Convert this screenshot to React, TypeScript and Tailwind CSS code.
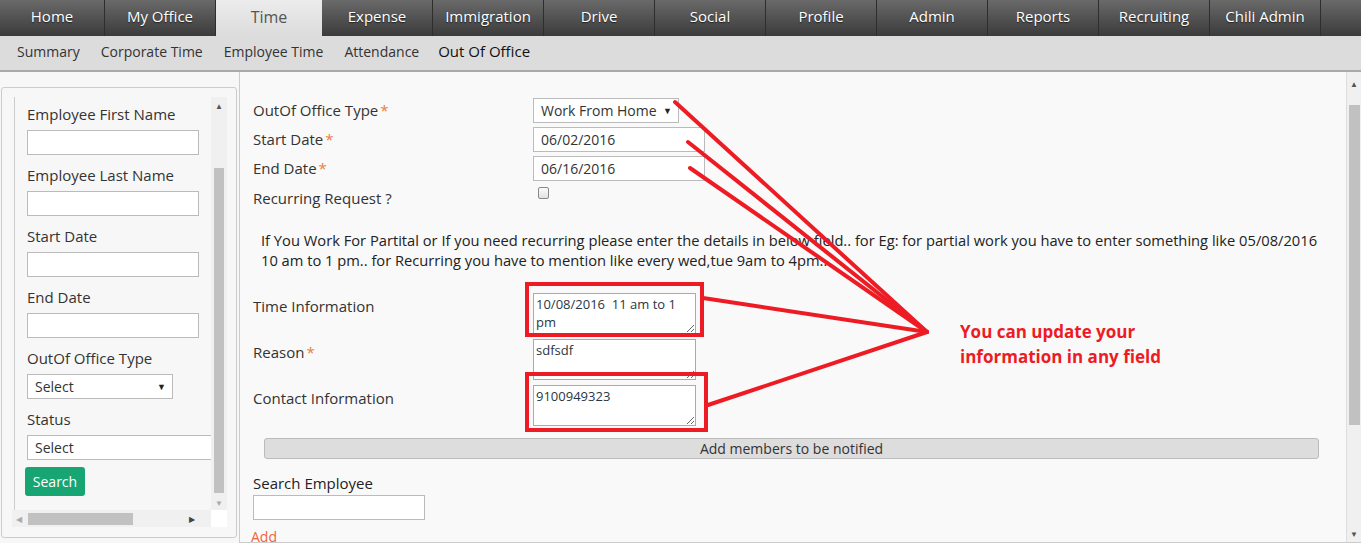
import React from 'react';

const tabs = ['Home', 'My Office', 'Time', 'Expense', 'Immigration', 'Drive', 'Social', 'Profile', 'Admin', 'Reports', 'Recruiting', 'Chili Admin'];
const subTabs = ['Summary', 'Corporate Time', 'Employee Time', 'Attendance'];

function Req() {
  return <span className="text-[#e8803c] ml-[2px]">*</span>;
}

function TextBox({ value = '', className = '' }: { value?: string; className?: string }) {
  return (
    <div className={`h-[25px] bg-white border border-[#bbb] flex items-center pl-[7px] text-[14px] text-[#333] ${className}`}>
      {value}
    </div>
  );
}

function SelectBox({ value, className = '' }: { value: string; className?: string }) {
  return (
    <div className={`h-[25px] bg-white border border-[#bbb] flex items-center justify-between pl-[7px] pr-[6px] text-[14px] text-[#333] ${className}`}>
      <span>{value}</span>
      <span className="text-[9px] text-[#222]">▼</span>
    </div>
  );
}

function Area({ value }: { value: string }) {
  return (
    <textarea
      readOnly
      defaultValue={value}
      className="w-[163px] h-[41px] bg-white border border-[#aaa] px-[2px] py-[1px] text-[13px] leading-[18px] text-[#2b3644] resize-y outline-none block font-['Open_Sans']"
    />
  );
}

function Field({ label, children }: { label: string; children: React.ReactNode }) {
  return (
    <div className="flex flex-col gap-[6px] mb-[10px]">
      <div className="text-[15px] leading-[20px] text-[#333]">{label}</div>
      {children}
    </div>
  );
}

export default function App() {
  return (
    <div className="w-[1361px] h-[543px] overflow-hidden relative bg-[#f7f7f7] font-['Open_Sans',sans-serif]">
      {/* top tabs */}
      <nav className="h-[36px] flex bg-gradient-to-b from-[#6a6a6a] to-[#3b3b3b]">
        {tabs.map((t, i) =>
          t === 'Time' ? (
            <div key={t} className="w-[106px] flex items-center justify-center pb-[3px] bg-gradient-to-b from-[#ececec] to-[#dcdcdc] text-[16px] text-[#555]">
              {t}
            </div>
          ) : (
            <div
              key={t}
              className={`${i === 0 ? 'w-[105px]' : 'w-[111px]'} flex items-center justify-center pb-[4px] text-[15px] text-white border-r border-[#2e2e2e] [text-shadow:0_1px_1px_#222]`}
            >
              {t}
            </div>
          )
        )}
      </nav>

      {/* sub tabs */}
      <div className="h-[36px] bg-[#dcdcdc] border-b-2 border-[#a9a9a9] flex items-center gap-[21px] pl-[17px] pb-[4px]">
        {subTabs.map((t) => (
          <span key={t} className="text-[14px] text-[#333]">{t}</span>
        ))}
        <span className="text-[15px] text-[#111] -ml-[2px]">Out Of Office</span>
      </div>

      <div className="flex h-[471px]">
        {/* left filter panel */}
        <aside className="w-[239px] pt-[15px] pl-[1px]">
          <div className="w-[236px] h-[451px] border border-[#ccc] rounded-[3px] pt-[9px] pl-[10px]">
            <div className="w-[215px] h-[430px] flex flex-col">
              <div className="flex h-[413px]">
                <div className="w-[197px] ml-[2px] border-l border-[#ccc] pl-[12px] pt-[7px] overflow-hidden">
                  <Field label="Employee First Name"><TextBox className="w-[172px]" /></Field>
                  <Field label="Employee Last Name"><TextBox className="w-[172px]" /></Field>
                  <Field label="Start Date"><TextBox className="w-[172px]" /></Field>
                  <Field label="End Date"><TextBox className="w-[172px]" /></Field>
                  <Field label="OutOf Office Type"><SelectBox value="Select" className="w-[146px]" /></Field>
                  <div className="flex flex-col gap-[6px]">
                    <div className="text-[15px] leading-[20px] text-[#333]">Status</div>
                    <TextBox value="Select" className="w-[200px]" />
                  </div>
                  <button className="mt-[7px] -ml-[2px] w-[60px] h-[29px] rounded-[3px] bg-[#17a673] text-white text-[14px]">Search</button>
                </div>
                <div className="w-[16px] bg-[#f0f0f0] flex flex-col items-center">
                  <span className="text-[8px] text-[#555] mt-[3px] h-[10px]">▲</span>
                  <div className="w-[10px] mt-[58px] h-[325px] bg-[#c1c1c1]" />
                  <span className="text-[8px] text-[#aaa] mt-[4px]">▼</span>
                </div>
              </div>
              <div className="h-[17px] flex">
                <div className="w-[199px] bg-[#f0f0f0] flex items-center">
                  <span className="text-[8px] text-[#aaa] ml-[4px]">◀</span>
                  <div className="ml-[6px] w-[105px] h-[12px] bg-[#c1c1c1]" />
                  <span className="text-[8px] text-[#444] ml-[56px]">▶</span>
                </div>
                <div className="w-[16px] bg-white" />
              </div>
            </div>
          </div>
        </aside>

        {/* main form */}
        <main className="flex-1 border-l border-[#ccc] border-b flex bg-[#f9f9f9]">
          <div className="flex-1 pl-[13px] pt-[24px]">
            <div className="flex items-center h-[29px]">
              <div className="w-[280px] text-[15px] text-[#333]">OutOf Office Type<Req /></div>
              <SelectBox value="Work From Home" className="w-[146px]" />
            </div>
            <div className="flex items-center h-[29px]">
              <div className="w-[280px] text-[15px] text-[#333]">Start Date<Req /></div>
              <TextBox value="06/02/2016" className="w-[172px]" />
            </div>
            <div className="flex items-center h-[29px]">
              <div className="w-[280px] text-[15px] text-[#333]">End Date<Req /></div>
              <TextBox value="06/16/2016" className="w-[172px]" />
            </div>
            <div className="flex items-start h-[29px] pt-[5px]">
              <div className="w-[280px] text-[15px] text-[#333] leading-[20px]">Recurring Request ?</div>
              <div className="ml-[5px] mt-[-1px] w-[11px] h-[12px] rounded-[2px] border border-[#888] bg-gradient-to-b from-[#fafafa] to-[#e2e2e2]" />
            </div>

            <p className="mt-[18px] pl-[8px] pr-[20px] text-[14.7px] leading-[20px] text-[#222]">
              If You Work For Partital or If you need recurring please enter the details in below field.. for Eg: for partial work you have to enter something like 05/08/2016 10 am to 1 pm.. for Recurring you have to mention like every wed,tue 9am to 4pm..
            </p>

            <div className="flex items-start mt-[23px]">
              <div className="w-[280px] text-[15px] text-[#333] leading-[20px] pt-[3px]">Time Information</div>
              <Area value="10/08/2016  11 am to 1 pm" />
            </div>
            <div className="flex items-start mt-[5px]">
              <div className="w-[280px] text-[15px] text-[#333] leading-[20px] pt-[3px]">Reason<Req /></div>
              <Area value="sdfsdf" />
            </div>
            <div className="flex items-start mt-[5px]">
              <div className="w-[280px] text-[15px] text-[#333] leading-[20px] pt-[3px]">Contact Information</div>
              <Area value="9100949323" />
            </div>

            <div className="mt-[12px] ml-[11px] w-[1055px] h-[21px] rounded-[3px] bg-[#dddddd] border border-[#bbb] flex items-center justify-center text-[14px] text-[#333]">
              Add members to be notified
            </div>

            <div className="mt-[14px] text-[15px] leading-[20px] text-[#222]">Search Employee</div>
            <TextBox className="w-[172px] mt-[2px]" />
            <div className="mt-[7px] -ml-[2px] text-[14px] leading-[20px] text-[#f0643c]">Add</div>
          </div>

          <div className="w-[15px] bg-[#f0f0f0] border-l border-[#ddd] flex flex-col items-center">
            <span className="text-[8px] text-[#555] mt-[6px] h-[12px]">▲</span>
            <div className="w-[11px] mt-[15px] h-[320px] bg-[#c1c1c1]" />
            <div className="flex-1" />
            <span className="text-[8px] text-[#555] mb-[2px]">▼</span>
          </div>
        </main>
      </div>

      {/* annotation overlay */}
      <svg className="absolute left-0 top-0 pointer-events-none" width="1361" height="543">
        <g stroke="#ed1c24" strokeWidth="4" fill="none" strokeLinecap="round">
          <line x1="675" y1="102" x2="927" y2="332" />
          <line x1="688" y1="142" x2="927" y2="332" />
          <line x1="690" y1="168" x2="927" y2="332" />
          <line x1="703" y1="298" x2="927" y2="332" />
          <line x1="708" y1="405" x2="927" y2="332" />
          <rect x="527" y="284" width="175" height="51" strokeLinecap="butt" />
          <rect x="527" y="374" width="179" height="56" strokeLinecap="butt" />
        </g>
      </svg>
      <div className="absolute left-[960px] top-[319px] text-[17px] leading-[25px] font-bold text-[#ed1c24]">
        You can update your<br />information in any field
      </div>
    </div>
  );
}
